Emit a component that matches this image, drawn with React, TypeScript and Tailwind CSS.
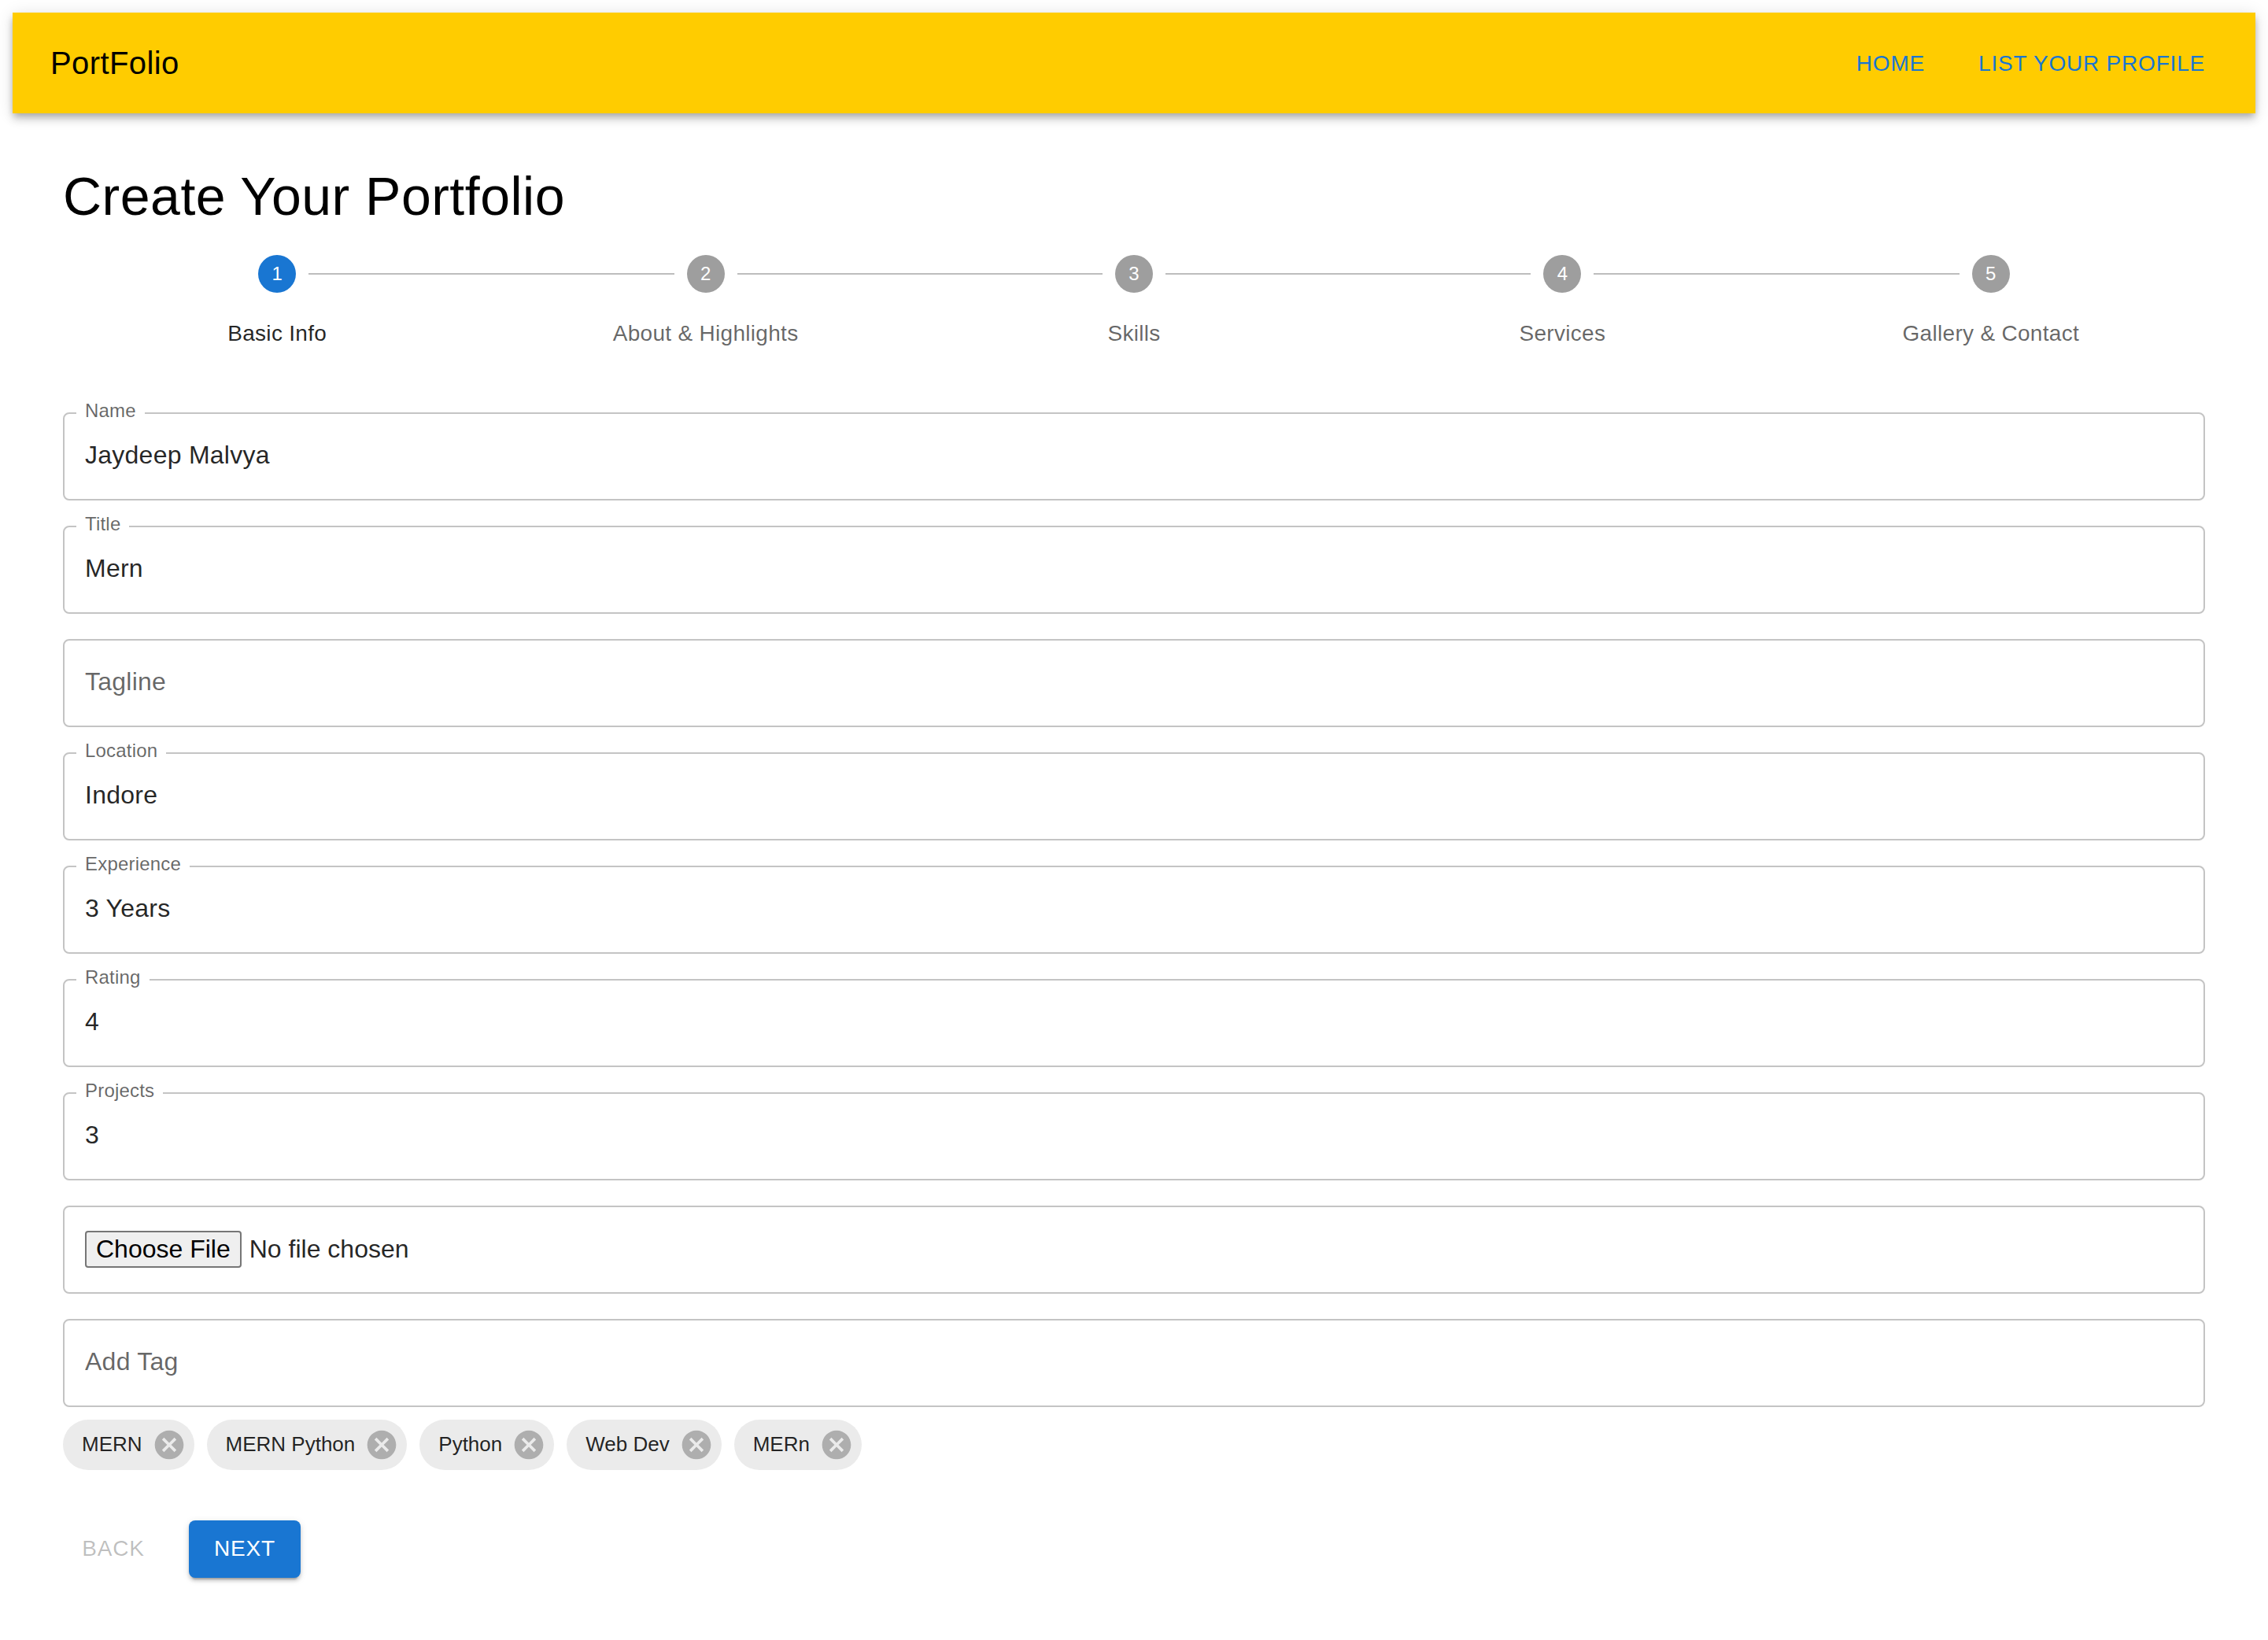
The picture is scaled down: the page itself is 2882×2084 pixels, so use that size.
import React from "react";

const steps = ["Basic Info", "About & Highlights", "Skills", "Services", "Gallery & Contact"];

const fields: { label: string; value: string }[] = [
  { label: "Name", value: "Jaydeep Malvya" },
  { label: "Title", value: "Mern" },
  { label: "Tagline", value: "" },
  { label: "Location", value: "Indore" },
  { label: "Experience", value: "3 Years" },
  { label: "Rating", value: "4" },
  { label: "Projects", value: "3" },
];

const tags = ["MERN", "MERN Python", "Python", "Web Dev", "MERn"];

const CancelIcon = () => (
  <svg viewBox="0 0 24 24" className="w-[44px] h-[44px] -ml-[12px] mr-[10px] fill-[rgba(0,0,0,0.26)]">
    <path d="M12 2C6.47 2 2 6.47 2 12s4.47 10 10 10 10-4.47 10-10S17.53 2 12 2zm5 13.59L15.59 17 12 13.41 8.41 17 7 15.59 10.59 12 7 8.41 8.41 7 12 10.59 15.59 7 17 8.41 13.41 12 17 15.59z" />
  </svg>
);

const OutlinedField = ({ label, value }: { label: string; value: string }) => (
  <div className="relative h-[112px] w-full rounded-[8px] border-2 border-[#c4c4c4] flex items-center pl-[26px] pr-[26px] pb-[4px]">
    {value && (
      <span className="absolute -top-[16px] left-[15px] px-[11px] bg-white text-[24px] leading-[24px] tracking-[0.2px] text-[rgba(0,0,0,0.6)]">
        {label}
      </span>
    )}
    <input
      readOnly
      defaultValue={value}
      placeholder={value ? "" : label}
      className="w-full h-[46px] bg-transparent outline-none text-[32px] tracking-[0.25px] text-[rgba(0,0,0,0.87)] placeholder:text-[rgba(0,0,0,0.6)]"
    />
  </div>
);

export default function App() {
  return (
    <div className="min-h-screen bg-white p-[16px] font-['Liberation_Sans',Arial,sans-serif]">
      <header className="h-[128px] bg-[#ffcc00] flex items-center justify-between px-[48px] shadow-[0_4px_8px_-2px_rgba(0,0,0,0.2),0_8px_10px_0_rgba(0,0,0,0.14),0_2px_20px_0_rgba(0,0,0,0.12)]">
        <div className="text-[40px] leading-[1.6] tracking-[0.4px] text-black">PortFolio</div>
        <nav className="flex items-center gap-[36px]">
          <button className="px-[16px] py-[12px] text-[28px] leading-[1.75] uppercase tracking-[0.02857em] text-[#1976d2]">
            Home
          </button>
          <button className="px-[16px] py-[12px] text-[28px] leading-[1.75] uppercase tracking-[0.02857em] text-[#1976d2]">
            List Your Profile
          </button>
        </nav>
      </header>

      <main className="px-[64px] pt-[64px]">
        <h1 className="text-[68px] leading-[1.235] tracking-[0.5px] text-black">Create Your Portfolio</h1>

        <div className="mt-[32px] grid grid-cols-5">
          {steps.map((s, i) => (
            <div key={s} className="relative flex flex-col items-center">
              {i > 0 && (
                <div className="absolute top-[23px] left-[calc(-50%+40px)] right-[calc(50%+40px)] h-[2px] bg-[#bdbdbd]" />
              )}
              <div
                className={`w-[48px] h-[48px] rounded-full flex items-center justify-center text-[24px] text-white ${
                  i === 0 ? "bg-[#1976d2]" : "bg-[#9e9e9e]"
                }`}
              >
                {i + 1}
              </div>
              <div
                className={`mt-[32px] text-[28px] leading-[40px] tracking-[0.3px] ${
                  i === 0 ? "text-[rgba(0,0,0,0.87)]" : "text-[rgba(0,0,0,0.6)]"
                }`}
              >
                {s}
              </div>
            </div>
          ))}
        </div>

        <form className="mt-[80px] flex flex-col gap-[32px]">
          {fields.map((f) => (
            <OutlinedField key={f.label} label={f.label} value={f.value} />
          ))}
          <div className="h-[112px] w-full rounded-[8px] border-2 border-[#c4c4c4] flex items-center pl-[26px] pr-[26px]">
            <input
              type="file"
              className="w-full text-[32px] leading-[37px] text-[rgba(0,0,0,0.87)] file:mr-[10px] file:px-[12px] file:py-[3px] file:leading-[37px] file:border-2 file:border-solid file:border-[#767676] file:rounded-[4px] file:bg-[#efefef] file:text-black"
            />
          </div>
          <OutlinedField label="Add Tag" value="" />
        </form>

        <div className="mt-[16px] flex flex-wrap gap-[16px]">
          {tags.map((t) => (
            <div key={t} className="h-[64px] rounded-full bg-[#ebebeb] flex items-center">
              <span className="px-[24px] text-[26px] text-[rgba(0,0,0,0.87)]">{t}</span>
              <CancelIcon />
            </div>
          ))}
        </div>

        <div className="mt-[64px] flex items-center">
          <button
            disabled
            className="min-w-[128px] h-[73px] px-[16px] mr-[32px] text-[28px] uppercase tracking-[0.02857em] text-[rgba(0,0,0,0.26)]"
          >
            Back
          </button>
          <button className="h-[73px] px-[32px] rounded-[8px] bg-[#1976d2] text-white text-[28px] uppercase tracking-[0.02857em] shadow-[0_6px_2px_-4px_rgba(0,0,0,0.2),0_4px_4px_0_rgba(0,0,0,0.14),0_2px_10px_0_rgba(0,0,0,0.12)]">
            Next
          </button>
        </div>
      </main>
    </div>
  );
}
